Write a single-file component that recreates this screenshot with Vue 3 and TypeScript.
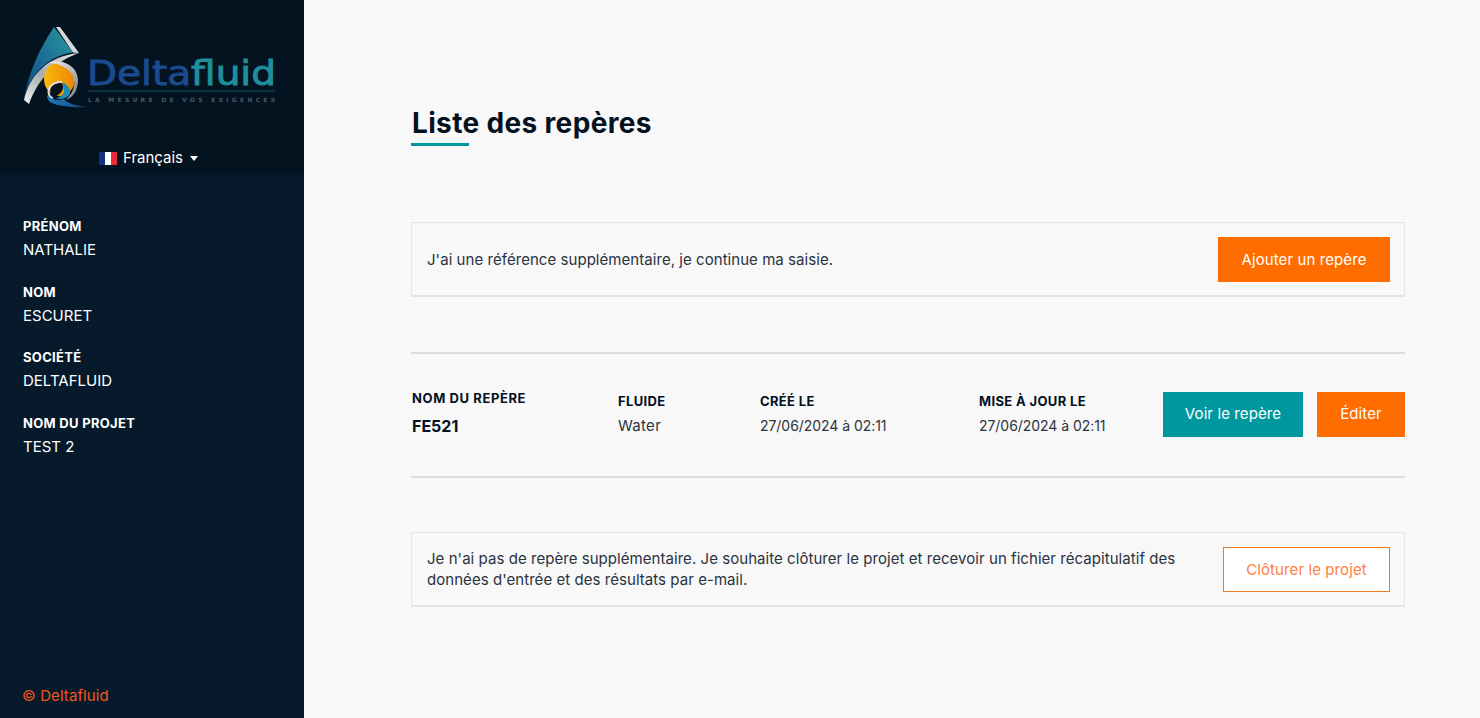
<script setup lang="ts">
interface Field { label: string; value: string }
const fields: Field[] = [
  { label: 'Prénom', value: 'NATHALIE' },
  { label: 'Nom', value: 'ESCURET' },
  { label: 'Société', value: 'DELTAFLUID' },
  { label: 'Nom du projet', value: 'TEST 2' },
]
</script>

<template>
  <div class="page">
    <aside class="side">
      <header class="brand">
        <svg class="logo" width="304" height="112" viewBox="0 0 304 112" role="img" aria-label="Deltafluid">
          <defs>
            <linearGradient id="sail" x1="0" y1="1" x2="1" y2="0">
              <stop offset="0" stop-color="#12477f" />
              <stop offset="0.5" stop-color="#1c6f96" />
              <stop offset="1" stop-color="#2a9a9c" />
            </linearGradient>
            <linearGradient id="sun" x1="0" y1="0" x2="1" y2="0">
              <stop offset="0" stop-color="#fdb80c" />
              <stop offset="1" stop-color="#e98506" />
            </linearGradient>
            <linearGradient id="steel" x1="0" y1="1" x2="1" y2="0">
              <stop offset="0" stop-color="#f0f0f0" />
              <stop offset="0.45" stop-color="#a6acb0" />
              <stop offset="1" stop-color="#e6e6e6" />
            </linearGradient>
            <linearGradient id="ring" x1="0" y1="0" x2="1" y2="1">
              <stop offset="0" stop-color="#f0f0f0" />
              <stop offset="1" stop-color="#7d8488" />
            </linearGradient>
            <linearGradient id="wave" x1="0" y1="0" x2="1" y2="0">
              <stop offset="0" stop-color="#1e78b8" />
              <stop offset="0.5" stop-color="#1a5f9e" />
              <stop offset="1" stop-color="#0b2a44" />
            </linearGradient>
          </defs>
          <path d="M54 27 C44 42 29 68 24 100 C30 76 46 56 73 52.5 Z" fill="url(#sail)" />
          <path d="M56 27 L60 27 L79 53 L73 52.5 Z" fill="#d5d8d8" />
          <path d="M24 100 C30 76 46 56 79 53 C58 60 38 78 29 104 Z" fill="url(#steel)" />
          <ellipse cx="59.5" cy="79" rx="15.5" ry="17" fill="url(#sun)" />
          <path d="M52 86 C56 83 60 82.5 62 83.5 C65 88 62 94 54 97 C50 95 49 89 52 86 Z" fill="#03131f" />
          <path d="M49 63 C62 58 79 66 78 82 C77 92 72 98 66 100 C71 95 74.5 89 74.5 82 C74.5 72 62 63 49 63 Z" fill="url(#ring)" />
          <path d="M62 82 C56 81 50 85 48.5 90 C48 94 50 97 53 98.5" fill="none" stroke="#dfe3e4" stroke-width="1.8" />
          <path d="M62 82 C67 84 71 89 70 93 C69 98 62 100 56 98.5 C60 97 65 94 64 90 C64 87 63 84 62 82 Z" fill="#1d8db3" />
          <path d="M47 95 C47 101 51 104 60 105.5 C72 107.5 84 107.5 92 107 C78 106.5 68 104 64 99 C58 101 52 100 47 95 Z" fill="url(#wave)" />
          <text x="87" y="84.5" class="wordmark" textLength="189" lengthAdjust="spacingAndGlyphs"><tspan fill="#1b4a8e" stroke="#1b4a8e">Delta</tspan><tspan fill="#1f8f9b" stroke="#1f8f9b">fluid</tspan></text>
          <line x1="88" y1="91" x2="275" y2="91" stroke="#17566f" stroke-width="1" />
          <text x="88" y="102" class="tagline" textLength="187">LA MESURE DE VOS EXIGENCES</text>
        </svg>
        <div class="lang">
          <span class="flag"><i class="blue"></i><i class="white"></i><i class="red"></i></span>
          <span>Français</span>
          <span class="caret"></span>
        </div>
      </header>
      <div class="info">
        <div v-for="f in fields" :key="f.label" class="field">
          <div class="flabel">{{ f.label }}</div>
          <div class="fvalue">{{ f.value }}</div>
        </div>
      </div>
      <footer class="copy">© Deltafluid</footer>
    </aside>

    <main class="main">
      <h1 class="title">Liste des repères</h1>

      <section class="box first">
        <p>J'ai une référence supplémentaire, je continue ma saisie.</p>
        <button class="btn orange add">Ajouter un repère</button>
      </section>

      <section class="row">
        <div class="col c1">
          <div class="rlabel up">Nom du repère</div>
          <div class="rname">FE521</div>
        </div>
        <div class="col c2">
          <div class="rlabel">Fluide</div>
          <div class="rvalue">Water</div>
        </div>
        <div class="col c3">
          <div class="rlabel">Créé le</div>
          <div class="rvalue date">27/06/2024 à 02:11</div>
        </div>
        <div class="col c4">
          <div class="rlabel">Mise à jour le</div>
          <div class="rvalue date">27/06/2024 à 02:11</div>
        </div>
        <div class="actions">
          <button class="btn teal view">Voir le repère</button>
          <button class="btn orange edit">Éditer</button>
        </div>
      </section>

      <section class="box last">
        <p>Je n'ai pas de repère supplémentaire. Je souhaite clôturer le projet et recevoir un fichier récapitulatif des données d'entrée et des résultats par e-mail.</p>
        <button class="btn ghost close">Clôturer le projet</button>
      </section>
    </main>
  </div>
</template>

<style>
html, body { margin: 0; padding: 0; background: #f8f8f8; }
</style>

<style scoped>
* { box-sizing: border-box; }
.page {
  display: flex;
  width: 1480px;
  height: 718px;
  overflow: hidden;
  font-family: Inter, "Open Sans", sans-serif;
  background: #f8f8f8;
}
.side {
  width: 304px;
  flex: none;
  background: #061a2c;
  color: #fff;
  display: flex;
  flex-direction: column;
}
.brand {
  height: 175px;
  background: #03131f;
  display: flex;
  flex-direction: column;
}
.logo { display: block; flex: none; }
.wordmark {
  font-family: "DejaVu Sans", sans-serif;
  font-size: 34px;
  stroke-width: 0.9px;
}
.tagline {
  font-family: "DejaVu Sans", sans-serif;
  font-size: 6px;
  font-weight: 700;
  fill: #4a5862;
}
.lang {
  margin-top: 36px;
  padding-right: 7px;
  display: flex;
  align-items: center;
  justify-content: center;
  gap: 5.5px;
  font-size: 15px;
  line-height: 20px;
}
.flag { display: flex; width: 18px; height: 13px; }
.flag i { flex: 1; display: block; }
.blue { background: #16307f; }
.white { background: #fff; }
.red { background: #ee2a3a; }
.caret {
  width: 0;
  height: 0;
  margin-left: 1px;
  border-left: 4.5px solid transparent;
  border-right: 4.5px solid transparent;
  border-top: 5px solid #fff;
}
.info { padding: 43px 23px 0; flex: 1; }
.field { height: 65.5px; }
.flabel {
  font-size: 13px;
  font-weight: 700;
  line-height: 17px;
  letter-spacing: 0.3px;
  text-transform: uppercase;
}
.fvalue {
  font-size: 15px;
  line-height: 20px;
  margin-top: 5px;
}
.copy {
  padding: 0 23px 12px;
  font-size: 15px;
  line-height: 20px;
  letter-spacing: 0.1px;
  color: #f0571a;
  margin-left: -1px;
}
.main {
  flex: 1;
  padding: 105px 75px 0 107px;
  min-width: 0;
  color: #2a3340;
}
.title {
  margin: 0;
  position: relative;
  font-size: 28px;
  line-height: 36px;
  font-weight: 700;
  letter-spacing: 0.35px;
  color: #04111f;
  padding-left: 1px;
}
.title::after {
  content: "";
  position: absolute;
  left: 0;
  top: 38px;
  width: 58px;
  height: 3px;
  background: #00979f;
}
.box {
  border: 1px solid #e4e4e4;
  border-bottom-width: 2px;
  display: flex;
  align-items: center;
  justify-content: space-between;
  height: 75px;
  padding: 0 14px 0 15px;
}
.box p {
  margin: 0;
  font-size: 15px;
  line-height: 21px;
  letter-spacing: 0.05px;
}
.first { margin-top: 81px; }
.last p { width: 760px; }
.btn {
  font-family: inherit;
  font-size: 15px;
  letter-spacing: 0.1px;
  height: 45px;
  padding: 0;
  border: 0;
  border-radius: 0;
  color: #fff;
}
.orange { background: #ff6c00; }
.teal { background: #00979f; }
.ghost { background: #fff; border: 1px solid #ee7a22; color: #ff7f41; }
.add { width: 172px; }
.close { width: 167px; }
.view { width: 140px; padding-bottom: 3px; }
.edit { width: 88px; padding-bottom: 3px; }
.row {
  margin-top: 55px;
  height: 126px;
  border-top: 2px solid #dcdcdc;
  border-bottom: 2px solid #dcdcdc;
  padding-bottom: 1px;
  display: flex;
  align-items: center;
}
.col { flex: none; }
.c1 { width: 207px; padding-left: 1px; }
.c2 { width: 142px; }
.c3 { width: 219px; }
.c4 { width: 184px; }
.rlabel {
  font-size: 13px;
  line-height: 17px;
  font-weight: 700;
  letter-spacing: 0.35px;
  color: #04111f;
  text-transform: uppercase;
}
.rlabel.up { margin-top: -3px; letter-spacing: 0.6px; }
.rname { font-size: 16px; line-height: 22px; font-weight: 700; color: #04111f; margin-top: 8px; }
.rvalue { font-size: 15px; line-height: 20px; margin-top: 6px; letter-spacing: 0.3px; }
.rvalue.date { font-size: 14px; letter-spacing: -0.05px; }
.actions { margin-left: auto; display: flex; gap: 14px; }
.last { margin-top: 54px; }
</style>
